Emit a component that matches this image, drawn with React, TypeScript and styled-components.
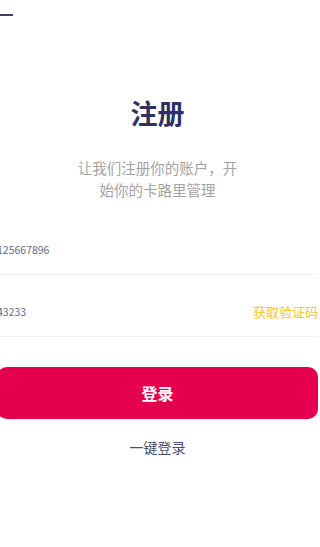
import styled, { createGlobalStyle } from "styled-components";

const GlobalStyle = createGlobalStyle`
  html, body {
    margin: 0;
    padding: 0;
    background: #ffffff;
    overflow: hidden;
  }
  body {
    font-family: "Noto Sans CJK SC", "Noto Sans", sans-serif;
  }
`;

const Screen = styled.div`
  width: 320px;
  height: 547px;
  overflow: hidden;
  background: #ffffff;
`;

const Page = styled.div`
  width: 321px;
  margin-left: -3px;
  display: flex;
  flex-direction: column;
`;

const Header = styled.div`
  height: 30px;
  display: flex;
  align-items: center;
`;

const BackIcon = styled.svg`
  margin-left: -8px;
`;

const Title = styled.h1`
  margin: 67px 0 0;
  font-size: 27px;
  line-height: 32px;
  font-weight: 700;
  color: #2f3163;
  text-align: center;
`;

const Subtitle = styled.p`
  margin: 28px auto 0;
  max-width: 166px;
  font-size: 14.5px;
  line-height: 21.5px;
  color: #a3a3a3;
  text-align: center;
`;

const Form = styled.div`
  margin-top: 13px;
  display: flex;
  flex-direction: column;
`;

const Field = styled.div`
  height: 62px;
  box-sizing: border-box;
  padding-top: 12px;
  border-bottom: 1px solid #f1f1f1;
  display: flex;
  align-items: center;
  justify-content: space-between;
`;

const Value = styled.span`
  font-size: 10.5px;
  line-height: 14px;
  color: #66688a;
`;

const CodeLink = styled.span`
  font-size: 13px;
  line-height: 18px;
  color: #f8c52c;
`;

const SubmitButton = styled.button`
  margin-top: 30px;
  height: 52px;
  border: none;
  border-radius: 10px;
  background: #e4004f;
  color: #ffffff;
  font-family: inherit;
  font-size: 16px;
  font-weight: 700;
  cursor: pointer;
`;

const QuickLogin = styled.div`
  margin-top: 18px;
  font-size: 14px;
  line-height: 20px;
  color: #4b4d6b;
  text-align: center;
`;

export default function App() {
  return (
    <Screen>
      <GlobalStyle />
      <Page>
        <Header>
          <BackIcon width="24" height="14" viewBox="0 0 24 14">
            <path
              d="M2 7 H24 M2 7 L8 1 M2 7 L8 13"
              stroke="#3d3f6e"
              strokeWidth="2"
              fill="none"
            />
          </BackIcon>
        </Header>
        <Title>注册</Title>
        <Subtitle>让我们注册你的账户，开始你的卡路里管理</Subtitle>
        <Form>
          <Field>
            <Value>125667896</Value>
          </Field>
          <Field>
            <Value>43233</Value>
            <CodeLink>获取验证码</CodeLink>
          </Field>
        </Form>
        <SubmitButton>登录</SubmitButton>
        <QuickLogin>一键登录</QuickLogin>
      </Page>
    </Screen>
  );
}
